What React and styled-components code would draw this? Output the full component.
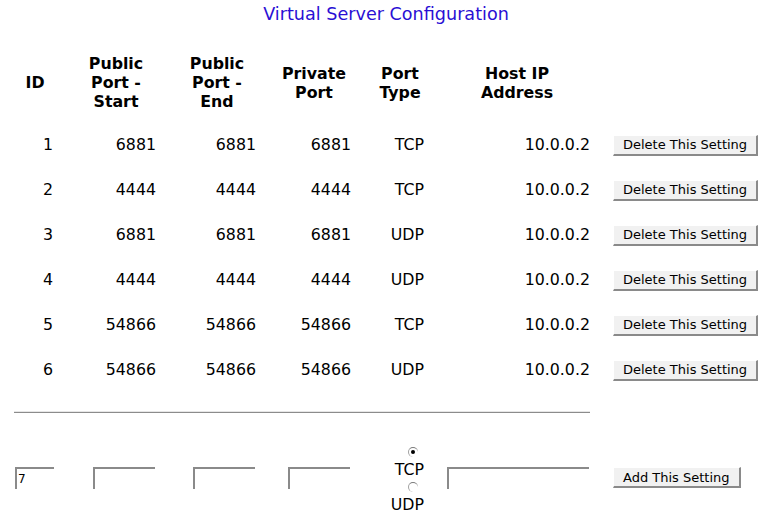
import React from "react";
import { styled, createGlobalStyle } from "styled-components";

const rows = [
  { id: 1, start: 6881, end: 6881, priv: 6881, type: "TCP", ip: "10.0.0.2" },
  { id: 2, start: 4444, end: 4444, priv: 4444, type: "TCP", ip: "10.0.0.2" },
  { id: 3, start: 6881, end: 6881, priv: 6881, type: "UDP", ip: "10.0.0.2" },
  { id: 4, start: 4444, end: 4444, priv: 4444, type: "UDP", ip: "10.0.0.2" },
  { id: 5, start: 54866, end: 54866, priv: 54866, type: "TCP", ip: "10.0.0.2" },
  { id: 6, start: 54866, end: 54866, priv: 54866, type: "UDP", ip: "10.0.0.2" },
];

// right padding for data cells, per column
const pads = [4, 19, 3, 18, 7, 13];

const GlobalStyle = createGlobalStyle`
  body {
    margin: 0;
    background: #ffffff;
    font-family: "DejaVu Sans", Verdana, sans-serif;
    color: #000000;
  }
`;

const Page = styled.div`
  width: 768px;
  height: 519px;
  overflow: hidden;
`;

const Title = styled.h1`
  margin: 0;
  height: 43px;
  padding-top: 4px;
  box-sizing: border-box;
  text-align: center;
  font-size: 17.6px;
  font-weight: 400;
  color: #2a0fd4;
  padding-left: 4px;
`;

const Grid = styled.div`
  display: grid;
  grid-template-columns: 44px 118px 84px 110px 62px 172px 165px;
  margin-left: 13px;
`;

const HeadCell = styled.div`
  height: 79px;
  display: flex;
  align-items: center;
  justify-content: center;
  text-align: center;
  font-weight: 700;
  font-size: 15.8px;
  line-height: 19px;
`;

const Cell = styled.div`
  height: 45px;
  display: flex;
  align-items: center;
  justify-content: flex-end;
  padding-right: ${(p) => p.$pad}px;
  font-size: 15.8px;
`;

const ButtonCell = styled.div`
  height: 45px;
  display: flex;
  align-items: center;
  padding-left: 10px;
`;

const Button = styled.button`
  font-family: "DejaVu Sans", Verdana, sans-serif;
  font-size: 13px;
  color: #000;
  background: #f1f1f1;
  height: 21px;
  padding: 0 9px 0 9px;
  border-style: solid;
  border-width: 1px 2px 2px 1px;
  border-color: #ffffff #8a8a8a #8a8a8a #ffffff;
  margin-top: 1px;
`;

const RuleRow = styled.div`
  grid-column: 1 / 7;
  height: 38px;
  display: flex;
  align-items: center;
  padding-left: 1px;
  padding-right: 13px;
`;

const Rule = styled.div`
  flex: 1;
  height: 2px;
  background: #8c8c8c;
  border-top: 1px solid #e6e6e6;
  box-sizing: border-box;
  margin-top: 2px;
`;

const EntryCell = styled.div`
  height: 94px;
  display: flex;
  align-items: center;
  justify-content: ${(p) => (p.$left ? "flex-start" : "flex-end")};
  padding-right: ${(p) => p.$pad || 0}px;
  padding-left: ${(p) => p.$padLeft || 0}px;
`;

const Field = styled.div`
  width: ${(p) => p.$w}px;
  height: 22px;
  box-sizing: border-box;
  border-top: 2px solid #8a8a8a;
  border-left: 2px solid #8a8a8a;
  font-size: 12px;
  line-height: 20px;
  padding-left: 1px;
  margin-top: 1px;
`;

const RadioGroup = styled.div`
  display: flex;
  flex-direction: column;
  align-items: flex-end;
  font-size: 15.8px;
  margin-top: 6px;
`;

const RadioLine = styled.div`
  height: 14px;
  display: flex;
  align-items: flex-end;
  padding-right: 6px;
`;

const RadioLabel = styled.div`
  line-height: 21px;
`;

const Radio = styled.span`
  display: block;
  width: 10px;
  height: 10px;
  border-radius: 50%;
  border-top: 1.5px solid #7a7a7a;
  border-left: 1.5px solid #a0a0a0;
  box-sizing: border-box;
  position: relative;
  margin-bottom: 2px;
  &::after {
    content: "";
    display: ${(p) => (p.$checked ? "block" : "none")};
    position: absolute;
    left: 2px;
    top: 2px;
    width: 4px;
    height: 4px;
    border-radius: 50%;
    background: #000;
  }
`;

const App = () => {
  return (
    <Page>
      <GlobalStyle />
      <Title>Virtual Server Configuration</Title>
      <Grid>
        <HeadCell>ID</HeadCell>
        <HeadCell>
          Public
          <br />
          Port -
          <br />
          Start
        </HeadCell>
        <HeadCell>
          Public
          <br />
          Port -
          <br />
          End
        </HeadCell>
        <HeadCell>
          Private
          <br />
          Port
        </HeadCell>
        <HeadCell>
          Port
          <br />
          Type
        </HeadCell>
        <HeadCell>
          Host IP
          <br />
          Address
        </HeadCell>
        <HeadCell />
        {rows.map((r) => (
          <React.Fragment key={r.id}>
            <Cell $pad={pads[0]}>{r.id}</Cell>
            <Cell $pad={pads[1]}>{r.start}</Cell>
            <Cell $pad={pads[2]}>{r.end}</Cell>
            <Cell $pad={pads[3]}>{r.priv}</Cell>
            <Cell $pad={pads[4]}>{r.type}</Cell>
            <Cell $pad={pads[5]}>{r.ip}</Cell>
            <ButtonCell>
              <Button>Delete This Setting</Button>
            </ButtonCell>
          </React.Fragment>
        ))}
        <RuleRow>
          <Rule />
        </RuleRow>
        <div />
        <EntryCell $left $padLeft={2}>
          <Field $w={39}>7</Field>
        </EntryCell>
        <EntryCell $pad={20}>
          <Field $w={62} />
        </EntryCell>
        <EntryCell $pad={4}>
          <Field $w={62} />
        </EntryCell>
        <EntryCell $pad={19}>
          <Field $w={62} />
        </EntryCell>
        <EntryCell $pad={7}>
          <RadioGroup>
            <RadioLine>
              <Radio $checked />
            </RadioLine>
            <RadioLabel>TCP</RadioLabel>
            <RadioLine>
              <Radio />
            </RadioLine>
            <RadioLabel>UDP</RadioLabel>
          </RadioGroup>
        </EntryCell>
        <EntryCell $pad={14}>
          <Field $w={142} />
        </EntryCell>
        <EntryCell $left $padLeft={10}>
          <Button>Add This Setting</Button>
        </EntryCell>
      </Grid>
    </Page>
  );
};

export default App;
